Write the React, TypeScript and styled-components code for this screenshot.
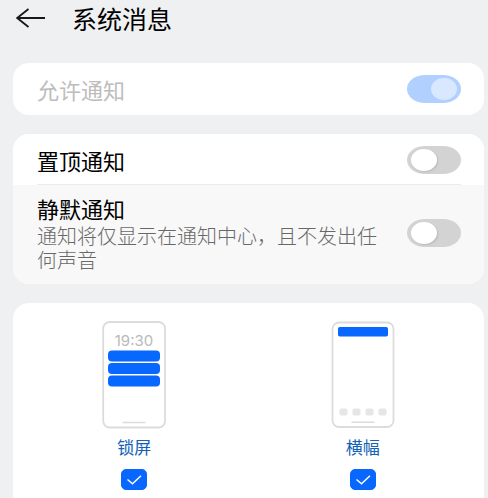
import React, { useState } from 'react';
import styled, { createGlobalStyle } from 'styled-components';

const GlobalStyle = createGlobalStyle`
  *, *::before, *::after { box-sizing: border-box; }
  body {
    margin: 0;
    background: #eff0f2;
    font-family: "Noto Sans CJK SC", sans-serif;
    color: #181818;
  }
`;

const Page = styled.div`
  display: flex;
  flex-direction: column;
  min-height: 100vh;
  padding: 0 4px 0 13px;
`;

const Header = styled.header`
  display: flex;
  align-items: center;
  gap: 26px;
  height: 36px;
  margin-bottom: 27px;
`;

const BackButton = styled.button`
  display: flex;
  padding: 0;
  margin-left: 3px;
  border: 0;
  background: none;
  color: #181818;
  cursor: pointer;
`;

const Title = styled.h1`
  margin: 0;
  font-size: 25px;
  line-height: 36px;
  font-weight: 400;
  color: #000;
`;

const Main = styled.main`
  display: flex;
  flex: 1;
  flex-direction: column;
  gap: 19px;
`;

const Card = styled.section`
  overflow: hidden;
  border-radius: 16px;
  background: #fff;
`;

const Row = styled.label<{ $shaded?: boolean }>`
  display: flex;
  align-items: center;
  justify-content: space-between;
  gap: 24px;
  min-height: 52px;
  padding: ${(p) => (p.$shaded ? '9px 23px 12px 24px' : '11px 23px 11px 24px')};
  background: ${(p) => (p.$shaded ? '#f8f8f8' : '#fff')};
`;

const Divider = styled.hr`
  height: 1px;
  margin: -2px 23px 0 24px;
  border: 0;
  background: #ebebeb;
`;

const RowText = styled.span`
  display: flex;
  flex: 1;
  flex-direction: column;
  gap: 2px;
`;

const RowTitle = styled.span<{ $disabled?: boolean }>`
  font-size: 22px;
  line-height: 28px;
  font-weight: 400;
  color: ${(p) => (p.$disabled ? '#bdbdbd' : '#000')};
`;

const Description = styled.span`
  font-size: 20px;
  line-height: 24px;
  font-weight: 300;
  color: #686868;
`;

const Switch = styled.input`
  appearance: none;
  display: flex;
  flex: none;
  align-items: center;
  width: 54px;
  height: 28px;
  margin: 0;
  padding: 0 4px;
  border-radius: 18px / 14px;
  background: #d3d3d3;

  &::before {
    content: "";
    width: 26px;
    height: 22px;
    border-radius: 50%;
    background: #fff;
    box-shadow: 1px 1px 2px rgba(0, 0, 0, 0.12);
  }

  &:checked {
    justify-content: flex-end;
    background: #0a66ff;
  }

  &:disabled:checked {
    background: #b1d0ff;
  }

  &:disabled::before {
    background: #d9e8ff;
    box-shadow: none;
  }
`;

const StyleCard = styled(Card)`
  display: grid;
  flex: 1;
  grid-template-columns: 1fr 1fr;
  padding: 18px 7px 8px;
  border-radius: 16px 16px 0 0;
`;

const StyleOption = styled.label`
  display: flex;
  flex-direction: column;
  align-items: center;
`;

const StyleName = styled.span`
  margin: 6px 0 10px;
  font-size: 17px;
  line-height: 24px;
  color: #1262b5;
`;

const CheckBox = styled.span`
  display: grid;
  width: 26px;
  height: 21px;

  > * { grid-area: 1 / 1; }
`;

const CheckInput = styled.input`
  appearance: none;
  width: 26px;
  height: 21px;
  margin: 0;
  border: 1px solid #b5b5b5;
  border-radius: 5px;

  &:checked {
    border-color: #0767ff;
    background: #0767ff;
  }
`;

const CheckMark = styled.svg`
  pointer-events: none;
`;

const PhoneArt = styled.svg`
  display: block;
`;

function LockScreenArt() {
  return (
    <PhoneArt width="64" height="108" viewBox="0 0 64 108" aria-hidden="true">
      <rect x="1.2" y="1" width="61.8" height="105.5" rx="6.5" fill="#fff" stroke="#dcdcdc" strokeWidth="1.8" />
      <text x="32" y="25" textAnchor="middle" fontFamily="Inter, sans-serif" fontSize="15" fill="#b9b9b9">19:30</text>
      <rect x="6" y="29.5" width="52" height="11" rx="4" fill="#0767ff" />
      <rect x="6" y="42" width="52" height="11" rx="4" fill="#0767ff" />
      <rect x="6" y="54.5" width="52" height="11" rx="4" fill="#0767ff" />
      <path d="M21 101.5h22" stroke="#dcdcdc" strokeWidth="1.3" strokeLinecap="round" />
    </PhoneArt>
  );
}

function BannerArt() {
  return (
    <PhoneArt width="64" height="108" viewBox="0 0 64 108" aria-hidden="true">
      <rect x="1.5" y="1.5" width="61" height="104.5" rx="6.5" fill="#fff" stroke="#dcdcdc" strokeWidth="1.8" />
      <rect x="7" y="6" width="50" height="9.5" rx="1.8" fill="#0767ff" />
      {[8.5, 21.5, 34.5, 47.5].map((x) => (
        <rect key={x} x={x} y="87.5" width="8" height="7" rx="2" fill="#e6e6e6" />
      ))}
      <path d="M21 101.3h22" stroke="#dcdcdc" strokeWidth="1.5" strokeLinecap="round" />
    </PhoneArt>
  );
}

function Option({ name, art }: { name: string; art: React.ReactNode }) {
  const [checked, setChecked] = useState(true);
  return (
    <StyleOption>
      {art}
      <StyleName>{name}</StyleName>
      <CheckBox>
        <CheckInput type="checkbox" checked={checked} onChange={(e) => setChecked(e.target.checked)} />
        {checked && (
          <CheckMark width="26" height="21" viewBox="0 0 26 21" fill="none" aria-hidden="true">
            <path d="M6.5 10.5l5 4.3 8.5-8" stroke="#fff" strokeWidth="1.5" />
          </CheckMark>
        )}
      </CheckBox>
    </StyleOption>
  );
}

export default function App() {
  const [pinned, setPinned] = useState(false);
  const [silent, setSilent] = useState(false);

  return (
    <>
      <GlobalStyle />
      <Page>
        <Header>
          <BackButton type="button" aria-label="返回">
            <svg width="30" height="22" viewBox="0 0 30 22" fill="none" aria-hidden="true">
              <path d="M29 11H1.5M12.5 2L1.2 11l11.3 9" stroke="currentColor" strokeWidth="1.8" />
            </svg>
          </BackButton>
          <Title>系统消息</Title>
        </Header>
        <Main>
          <Card>
            <Row>
              <RowTitle $disabled>允许通知</RowTitle>
              <Switch type="checkbox" role="switch" checked disabled readOnly />
            </Row>
          </Card>
          <Card>
            <Row>
              <RowTitle>置顶通知</RowTitle>
              <Switch type="checkbox" role="switch" checked={pinned} onChange={(e) => setPinned(e.target.checked)} />
            </Row>
            <Divider />
            <Row $shaded>
              <RowText>
                <RowTitle>静默通知</RowTitle>
                <Description>通知将仅显示在通知中心，且不发出任何声音</Description>
              </RowText>
              <Switch type="checkbox" role="switch" checked={silent} onChange={(e) => setSilent(e.target.checked)} />
            </Row>
          </Card>
          <StyleCard>
            <Option name="锁屏" art={<LockScreenArt />} />
            <Option name="横幅" art={<BannerArt />} />
          </StyleCard>
        </Main>
      </Page>
    </>
  );
}
